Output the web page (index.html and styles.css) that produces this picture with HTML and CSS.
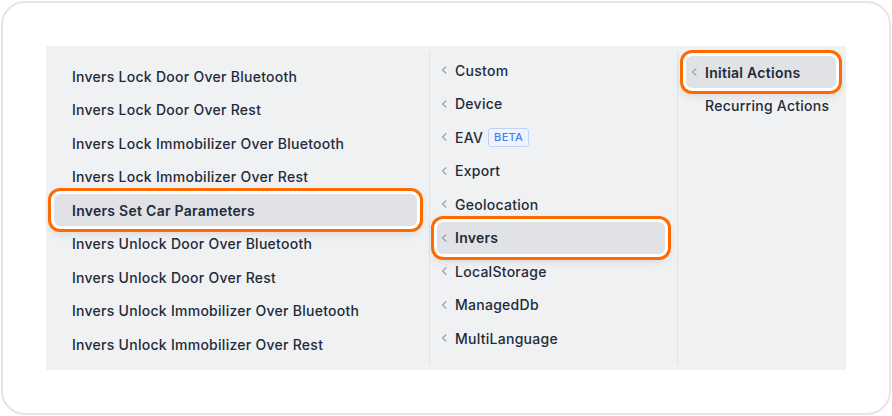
FILE: index.html
```html
<!DOCTYPE html>
<html>
<head>
<meta charset="utf-8">
<link rel="stylesheet" href="styles.css">
</head>
<body>
<div class="card">
  <div class="panel">
    <div class="col col1">
      <div class="item">Invers Lock Door Over Bluetooth</div>
      <div class="item">Invers Lock Door Over Rest</div>
      <div class="item">Invers Lock Immobilizer Over Bluetooth</div>
      <div class="item">Invers Lock Immobilizer Over Rest</div>
      <div class="item sel">Invers Set Car Parameters</div>
      <div class="item">Invers Unlock Door Over Bluetooth</div>
      <div class="item">Invers Unlock Door Over Rest</div>
      <div class="item">Invers Unlock Immobilizer Over Bluetooth</div>
      <div class="item">Invers Unlock Immobilizer Over Rest</div>
    </div>
    <div class="col col2">
      <div class="item"><svg class="chev" viewBox="0 0 6 8"><path d="M5 0.8 L1.5 4 L5 7.2"/></svg><span>Custom</span></div>
      <div class="item"><svg class="chev" viewBox="0 0 6 8"><path d="M5 0.8 L1.5 4 L5 7.2"/></svg><span>Device</span></div>
      <div class="item"><svg class="chev" viewBox="0 0 6 8"><path d="M5 0.8 L1.5 4 L5 7.2"/></svg><span>EAV</span><span class="beta">BETA</span></div>
      <div class="item"><svg class="chev" viewBox="0 0 6 8"><path d="M5 0.8 L1.5 4 L5 7.2"/></svg><span>Export</span></div>
      <div class="item"><svg class="chev" viewBox="0 0 6 8"><path d="M5 0.8 L1.5 4 L5 7.2"/></svg><span>Geolocation</span></div>
      <div class="item sel"><svg class="chev" viewBox="0 0 6 8"><path d="M5 0.8 L1.5 4 L5 7.2"/></svg><span>Invers</span></div>
      <div class="item"><svg class="chev" viewBox="0 0 6 8"><path d="M5 0.8 L1.5 4 L5 7.2"/></svg><span>LocalStorage</span></div>
      <div class="item"><svg class="chev" viewBox="0 0 6 8"><path d="M5 0.8 L1.5 4 L5 7.2"/></svg><span>ManagedDb</span></div>
      <div class="item"><svg class="chev" viewBox="0 0 6 8"><path d="M5 0.8 L1.5 4 L5 7.2"/></svg><span>MultiLanguage</span></div>
    </div>
    <div class="col col3">
      <div class="item sel"><svg class="chev" viewBox="0 0 6 8"><path d="M5 0.8 L1.5 4 L5 7.2"/></svg><span>Initial Actions</span></div>
      <div class="item plain">Recurring Actions</div>
    </div>
  </div>
</div>
</body>
</html>
```

FILE: styles.css
```css
html, body {
  margin: 0;
  padding: 0;
  background: #ffffff;
}
body {
  font-family: Inter, "Noto Sans", sans-serif;
  color: #222b3a;
}
.card {
  margin: 1px;
  width: 890px;
  height: 414px;
  box-sizing: border-box;
  border: 2px solid #e3e5e8;
  border-radius: 24px;
  padding: 43px 0 0 43px;
  background: #ffffff;
}
.panel {
  width: 800px;
  height: 324px;
  background: #f0f1f3;
  display: flex;
}
.col {
  margin: 6px 0;
  box-sizing: border-box;
}
.col1 {
  width: 383px;
  padding-top: 8px;
}
.col2 {
  width: 248px;
  border-left: 1px solid #e1e3e7;
  padding-top: 2px;
}
.col3 {
  width: 169px;
  border-left: 1px solid #e1e3e7;
  padding-top: 4px;
}
.item {
  height: 32px;
  margin-bottom: 1.5px;
  border-radius: 6px;
  display: flex;
  align-items: center;
  font-size: 14px;
  font-weight: 500;
  letter-spacing: 0.27px;
  white-space: nowrap;
}
.col1 .item {
  margin-left: 8px;
  margin-right: 12px;
  padding-left: 18px;
}
.col2 .item {
  margin-left: 7px;
  margin-right: 12px;
  padding-left: 4px;
}
.col3 .item {
  margin-left: 8px;
  margin-right: 10px;
  padding-left: 5px;
}
.col3 .item.plain {
  padding-left: 19px;
}
.chev {
  width: 6px;
  height: 8px;
  flex: none;
  margin-right: 8px;
}
.chev path {
  fill: none;
  stroke: #9ca1aa;
  stroke-width: 1.2;
  stroke-linecap: round;
  stroke-linejoin: round;
}
.item.sel {
  background: #e1e2e6;
  font-weight: 600;
  box-shadow: 0 0 0 3px #ffffff, 0 0 0 6px #ff6a00, 0 3px 10px 4px rgba(0, 0, 0, 0.12);
  position: relative;
}
.beta {
  margin-left: 5px;
  height: 19px;
  box-sizing: border-box;
  padding: 0 5px;
  border: 1px solid #bcd3fb;
  background: #eef4ff;
  color: #4a7cf0;
  border-radius: 3px;
  font-size: 11px;
  font-weight: 500;
  letter-spacing: 0.3px;
  display: flex;
  align-items: center;
}
```
